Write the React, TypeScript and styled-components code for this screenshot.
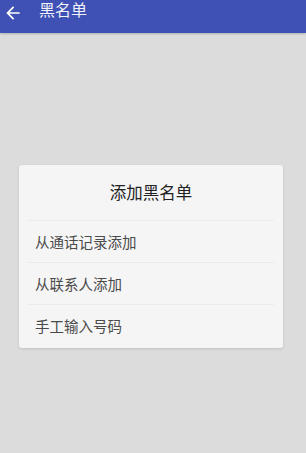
import styled, { createGlobalStyle } from "styled-components";

const GlobalStyle = createGlobalStyle`
	html, body {
		margin: 0;
		padding: 0;
		background: #dcdcdc;
		font-family: Roboto, "Noto Sans CJK SC", sans-serif;
	}
`;

const Page = styled.div`
	display: flex;
	flex-direction: column;
	width: 306px;
	height: 453px;
	background: #dcdcdc;
`;

const Toolbar = styled.div`
	display: flex;
	align-items: flex-start;
	height: 33px;
	padding: 3px 0 0 3px;
	box-sizing: border-box;
	background: #3f51b5;
	color: #ffffff;
	box-shadow: 0 1px 2px rgba(0, 0, 0, 0.2);
`;

const BackButton = styled.svg`
	width: 20px;
	height: 20px;
	margin-right: 16px;
`;

const Title = styled.span`
	font-size: 16px;
	line-height: 16px;
	color: #f2f2f8;
`;

const Body = styled.div`
	flex: 1;
	display: flex;
	padding: 132px 0 0 19px;
`;

const Dialog = styled.div`
	display: flex;
	flex-direction: column;
	width: 264px;
	height: 183px;
	background: #f5f5f5;
	border-radius: 3px;
	box-shadow: 0 1px 3px rgba(0, 0, 0, 0.12);
	padding: 0 9px;
	box-sizing: border-box;
`;

const DialogTitle = styled.div`
	height: 56px;
	display: flex;
	align-items: center;
	justify-content: center;
	padding-bottom: 2px;
	font-size: 16.5px;
	color: #222222;
	border-bottom: 1px solid #ebebeb;
	box-sizing: border-box;
`;

const Item = styled.div<{ $last?: boolean }>`
	height: ${(p) => (p.$last ? "41px" : "42px")};
	display: flex;
	align-items: center;
	padding-left: 7px;
	font-size: 14.5px;
	color: #4a4a4a;
	border-bottom: ${(p) => (p.$last ? "none" : "1px solid #ebebeb")};
	box-sizing: border-box;
`;

const items = ["从通话记录添加", "从联系人添加", "手工输入号码"];

export default function App() {
	return (
		<>
			<GlobalStyle />
			<Page>
				<Toolbar>
					<BackButton viewBox="0 0 24 24">
						<path
							d="M20 11H7.83l5.59-5.59L12 4l-8 8 8 8 1.41-1.41L7.83 13H20v-2z"
							fill="#ffffff"
						/>
					</BackButton>
					<Title>黑名单</Title>
				</Toolbar>
				<Body>
					<Dialog>
						<DialogTitle>添加黑名单</DialogTitle>
						{items.map((text, i) => (
							<Item key={i} $last={i === items.length - 1}>
								{text}
							</Item>
						))}
					</Dialog>
				</Body>
			</Page>
		</>
	);
}
